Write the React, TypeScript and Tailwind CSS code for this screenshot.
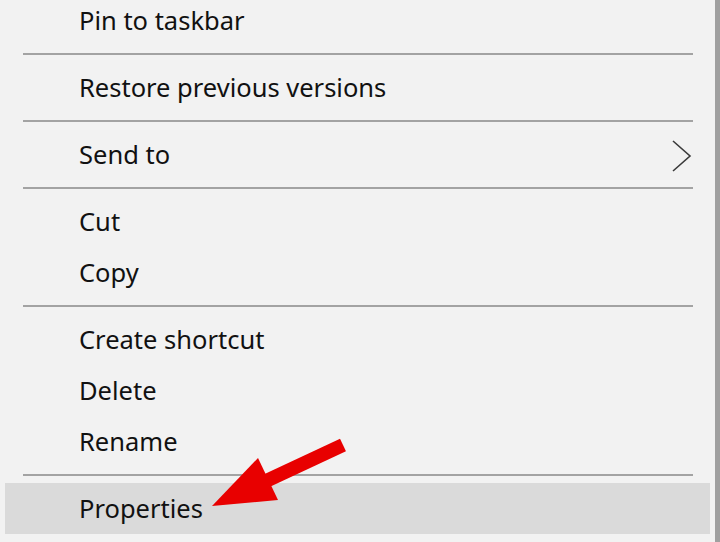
type Entry =
  | { kind: "item"; label: string; submenu?: boolean; active?: boolean }
  | { kind: "sep" };

const entries: Entry[] = [
  { kind: "item", label: "Pin to taskbar" },
  { kind: "sep" },
  { kind: "item", label: "Restore previous versions" },
  { kind: "sep" },
  { kind: "item", label: "Send to", submenu: true },
  { kind: "sep" },
  { kind: "item", label: "Cut" },
  { kind: "item", label: "Copy" },
  { kind: "sep" },
  { kind: "item", label: "Create shortcut" },
  { kind: "item", label: "Delete" },
  { kind: "item", label: "Rename" },
  { kind: "sep" },
  { kind: "item", label: "Properties", active: true },
];

export default function App() {
  return (
    <div className="relative flex h-[542px] w-[720px] overflow-hidden bg-[#f2f2f2] font-['Noto_Sans',sans-serif] text-[#111]">
      <div className="-mt-[5px] flex flex-1 flex-col">
        {entries.map((entry, index) =>
          entry.kind === "sep" ? (
            <div key={index} className="flex h-[16px] items-center">
              <div className="ml-[23px] mr-[22px] h-[2px] flex-1 bg-[#a3a3a3]" />
            </div>
          ) : (
            <div
              key={index}
              className={
                entry.active
                  ? "mx-[5px] flex h-[51px] items-center bg-[#dadada] pl-[74px] text-[25.5px]"
                  : "flex h-[51px] items-center pl-[79px] pr-[23px] text-[25.5px]"
              }
            >
              <span className="flex-1">{entry.label}</span>
              {entry.submenu && (
                <svg width="20" height="32" viewBox="0 0 20 32" className="mt-[2px]">
                  <polyline
                    points="1,1 18,16 1,31"
                    fill="none"
                    stroke="#3a3a3a"
                    strokeWidth="1.6"
                  />
                </svg>
              )}
            </div>
          )
        )}
      </div>
      <div className="w-[5px] bg-[#a0a0a0]" />

      <svg
        className="pointer-events-none absolute left-0 top-0"
        width="720"
        height="542"
        viewBox="0 0 720 542"
      >
        <line x1="343" y1="445" x2="266" y2="481" stroke="#e80000" strokeWidth="14" />
        <polygon points="212,506 258,458 278,500" fill="#e80000" />
      </svg>
    </div>
  );
}
